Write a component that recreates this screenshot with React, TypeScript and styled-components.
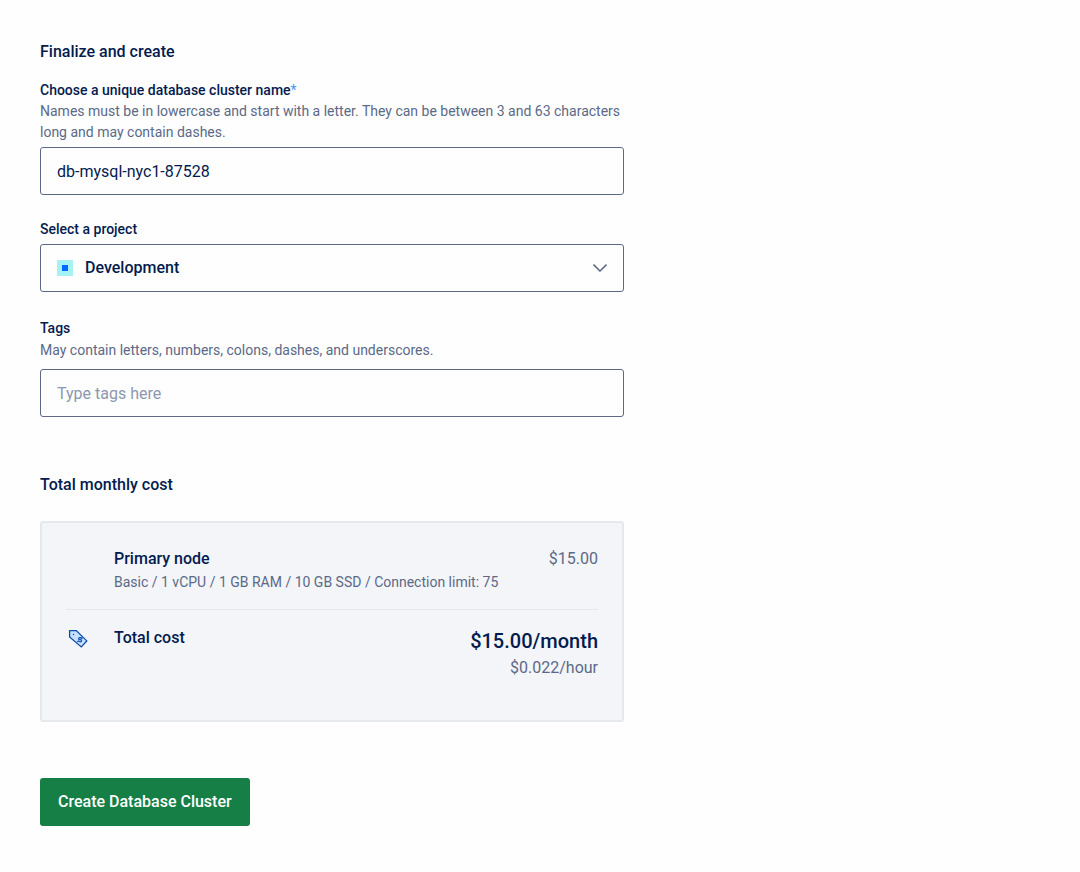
import React, { useState } from "react";
import styled, { createGlobalStyle } from "styled-components";

const color = {
  navy: "#031b4e",
  slate: "#5b6987",
  placeholder: "#8d97b0",
  line: "#e5e8ed",
  panel: "#f3f5f9",
  green: "#157f46",
  blue: "#0069ff",
  tag: "#0b4da8",
};

const GlobalStyle = createGlobalStyle`
  *, *::before, *::after { box-sizing: border-box; }
  body {
    margin: 0;
    background: #fefefe;
    color: ${color.navy};
    font-family: Roboto, "Liberation Sans", sans-serif;
    font-size: 16px;
    line-height: 24px;
  }
  h2, p, dl, dt, dd { margin: 0; }
  button, input, select { font: inherit; color: inherit; }
`;

const Form = styled.form`
  max-width: 664px;
  padding: 40px;
`;

const Heading = styled.h2`
  font-size: 16px;
  line-height: 24px;
  font-weight: 500;
`;

const Field = styled.div<{ $top?: number; $gap?: number }>`
  display: flex;
  flex-direction: column;
  margin-top: ${({ $top = 24 }) => $top}px;

  > :last-child { margin-top: ${({ $gap = 4 }) => $gap}px; }
`;

const Label = styled.label`
  font-size: 14px;
  line-height: 21px;
  font-weight: 500;
`;

const Required = styled.span`
  color: #4a94ff;
  font-weight: 400;
`;

const Hint = styled.p<{ $spaced?: boolean }>`
  padding-top: ${({ $spaced }) => ($spaced ? 1 : 0)}px;
  color: ${color.slate};
  font-size: 14px;
  line-height: 21px;
  font-weight: 400;
`;

const TextInput = styled.input`
  width: 100%;
  height: 48px;
  padding: 0 16px;
  background: transparent;
  border: 1px solid ${color.slate};
  border-radius: 3px;

  &::placeholder { color: ${color.placeholder}; opacity: 1; }
`;

const SelectBox = styled.div`
  display: flex;
  align-items: center;
  height: 48px;
  padding: 0 16px;
  border: 1px solid ${color.slate};
  border-radius: 3px;
`;

const Select = styled.select`
  flex: 1;
  height: 100%;
  padding: 0 12px;
  appearance: none;
  background: transparent;
  border: 0;
  outline: 0;
  font-weight: 500;
`;

const CostSection = styled.section`
  margin-top: 56px;
`;

const CostCard = styled.dl`
  margin-top: 24px;
  padding: 24px 24px 40px;
  background: ${color.panel};
  border: 2px solid ${color.line};
  border-radius: 3px;
`;

const CostRow = styled.div`
  display: grid;
  grid-template-columns: 24px 1fr auto;
  column-gap: 24px;
  padding-bottom: 16px;

  & + & {
    padding: 16px 0 0;
    border-top: 1px solid ${color.line};
  }
`;

const CostName = styled.dt`
  grid-column: 2;
  font-weight: 500;
`;

const CostValue = styled.dd`
  color: ${color.slate};
  text-align: right;
`;

const Monthly = styled.p`
  color: ${color.navy};
  font-size: 20px;
  line-height: 30px;
  font-weight: 500;
`;

const SubmitButton = styled.button`
  height: 48px;
  margin-top: 56px;
  padding: 0 18px;
  background: ${color.green};
  border: 0;
  border-radius: 3px;
  color: #fff;
  font-weight: 500;
  cursor: pointer;
`;

const ProjectIcon = () => (
  <svg width="16" height="16" viewBox="0 0 16 16" aria-hidden="true">
    <rect width="16" height="16" fill="#a5f1f3" />
    <rect x="5" y="5" width="6" height="6" fill={color.blue} />
  </svg>
);

const Chevron = () => (
  <svg width="14" height="8" viewBox="0 0 14 8" fill="none" stroke={color.slate} strokeWidth="1.5" aria-hidden="true">
    <path d="M.5.6 7 7 13.5.6" />
  </svg>
);

const PriceTag = () => (
  <svg width="24" height="24" viewBox="0 0 24 24" fill="none" stroke={color.tag} aria-hidden="true">
    <path d="M3.600 4.600h6.700l10.500 10.300-5.500 6L3.600 11z" fill="#c6e0ff" strokeWidth="1.300" />
    <circle cx="7.500" cy="8.500" r=".7" fill={color.tag} stroke="none" />
    <path
      d="M15.600 12.600c-.9-1.300-2.500-1.200-3-.4-.6 1 .3 1.700 1.500 1.500 1.200-.3 2 .5 1.500 1.400-.5.900-2 .9-3-.3M16.200 11.300l-1 1M12.800 15.200l-1 1"
      transform="rotate(12 14 13.700)"
      strokeWidth="1.200"
    />
  </svg>
);

export default function App() {
  const [name, setName] = useState("db-mysql-nyc1-87528");
  const [tags, setTags] = useState("");

  return (
    <>
      <GlobalStyle />
      <Form onSubmit={(event) => event.preventDefault()}>
        <Heading>Finalize and create</Heading>

        <Field $top={16}>
          <Label htmlFor="cluster-name">
            Choose a unique database cluster name<Required>*</Required>
          </Label>
          <Hint id="cluster-name-hint">
            Names must be in lowercase and start with a letter. They can be between 3 and 63
            characters long and may contain dashes.
          </Hint>
          <TextInput
            id="cluster-name"
            aria-describedby="cluster-name-hint"
            value={name}
            onChange={(event) => setName(event.target.value)}
          />
        </Field>

        <Field>
          <Label htmlFor="project">Select a project</Label>
          <SelectBox>
            <ProjectIcon />
            <Select id="project" defaultValue="development">
              <option value="development">Development</option>
            </Select>
            <Chevron />
          </SelectBox>
        </Field>

        <Field $top={26} $gap={8}>
          <Label htmlFor="tags">Tags</Label>
          <Hint id="tags-hint" $spaced>
            May contain letters, numbers, colons, dashes, and underscores.
          </Hint>
          <TextInput
            id="tags"
            aria-describedby="tags-hint"
            placeholder="Type tags here"
            value={tags}
            onChange={(event) => setTags(event.target.value)}
          />
        </Field>

        <CostSection>
          <Heading>Total monthly cost</Heading>
          <CostCard>
            <CostRow>
              <CostName>
                Primary node
                <Hint $spaced>Basic / 1 vCPU / 1 GB RAM / 10 GB SSD / Connection limit: 75</Hint>
              </CostName>
              <CostValue>$15.00</CostValue>
            </CostRow>
            <CostRow>
              <PriceTag />
              <CostName>Total cost</CostName>
              <CostValue>
                <Monthly>$15.00/month</Monthly>
                $0.022/hour
              </CostValue>
            </CostRow>
          </CostCard>
        </CostSection>

        <SubmitButton type="submit">Create Database Cluster</SubmitButton>
      </Form>
    </>
  );
}
